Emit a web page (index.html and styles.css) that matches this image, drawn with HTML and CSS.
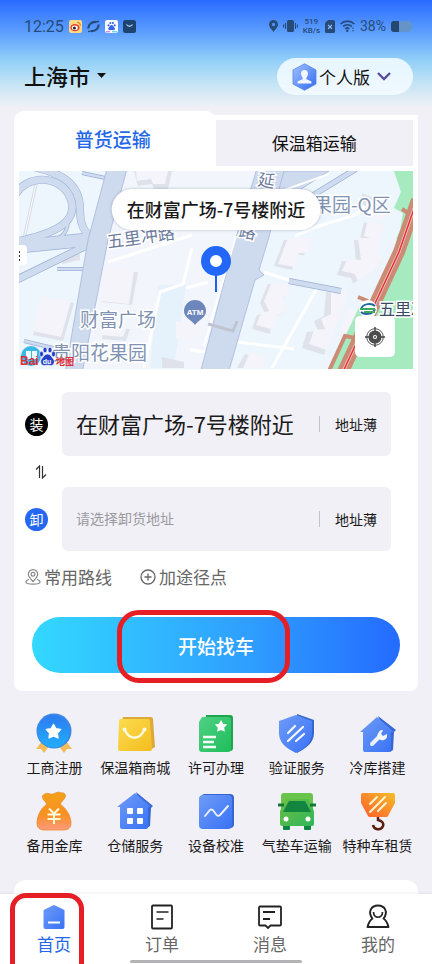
FILE: index.html
```
<!DOCTYPE html>
<html lang="zh-CN">
<head>
	<meta charset="UTF-8">
	<meta name="viewport" content="width=device-width, initial-scale=1">
	<title>首页</title>
	<link rel="stylesheet" href="styles.css">
</head>
<body>
<div id="wrapper">
    <header class="header">
        <div class="status-bar">
            <div class="status-left">
                <span class="time">12:25</span>
                <svg class="s-icon" viewBox="0 0 13 13"><rect width="13" height="13" rx="2" fill="#fbd986"/><ellipse cx="6" cy="7.6" rx="4.6" ry="3.6" fill="#e2402c"/><ellipse cx="5.8" cy="7.8" rx="3" ry="2.3" fill="#fff"/><circle cx="5.4" cy="8" r="1.5" fill="#222"/><path d="M8.3 2.4a3 3 0 0 1 3 3.3" fill="none" stroke="#e8792c" stroke-width="1.2"/></svg>
                <svg class="s-icon" viewBox="0 0 13 13"><path d="M1.500 8.500C1 5 4.500 1.500 9 2M11.500 4.500C12 8 8.500 11.500 4 11" fill="none" stroke="#274b78" stroke-width="2.200"/><path d="M1 11.500C2.500 11.500 4 11.200 5 10.500M12 1.500C10.500 1.500 9 1.800 8 2.500" fill="none" stroke="#274b78" stroke-width="1.500"/></svg>
                <svg class="s-icon" viewBox="0 0 13 13"><rect width="13" height="13" rx="2" fill="#fff"/><g fill="#3468e8"><circle cx="3.500" cy="5.300" r="1.100"/><circle cx="5.300" cy="3" r="1.100"/><circle cx="7.900" cy="3" r="1.100"/><circle cx="9.700" cy="5.300" r="1.100"/><path d="M6.600 5c1.600 0 1.800 1.600 2.800 2.500 1.200 1.200.3 3-1.200 2.700-1-.2-2.200-.2-3.200 0-1.500.3-2.400-1.500-1.200-2.700C4.800 6.600 5 5 6.600 5z"/></g><path d="M1 11.800h4" stroke="#c35bd8"/><path d="M7 11.800h5" stroke="#31c4dc"/></svg>
                <svg class="s-icon" viewBox="0 0 13 13"><rect width="13" height="13" rx="2.500" fill="#1f436f"/><path d="M3.500 4.500c1.500 2.300 4.500 2.300 6 0" fill="none" stroke="#9cc6f3" stroke-width="1.300"/></svg>
            </div>
            <div class="status-right">
                <svg width="9" height="12" viewBox="0 0 9 12"><path fill-rule="evenodd" d="M4.500 0A4.500 4.500 0 0 1 9 4.500C9 7.500 6 9.500 4.500 12 3 9.500 0 7.500 0 4.500A4.500 4.500 0 0 1 4.500 0zm0 2.800a1.700 1.700 0 1 0 0 3.400 1.700 1.700 0 0 0 0-3.400z" fill="#274b78"/></svg>
                <svg width="15" height="12" viewBox="0 0 15 12"><rect x="4" width="7" height="12" rx="1.500" fill="#274b78"/><path d="M2.500 3v6M.6 4.500v3M12.500 3v6M14.400 4.500v3" stroke="#274b78" stroke-width="1.100"/></svg>
                <span class="speed"><span>519</span><span>KB/s</span></span>
                <svg width="10" height="13" viewBox="0 0 10 13"><path d="M3 0h5.500A1.500 1.500 0 0 1 10 1.500v10A1.500 1.500 0 0 1 8.500 13h-7A1.500 1.500 0 0 1 0 11.500V3z" fill="#274b78"/><path d="M3 4.800l4 4M7 4.800l-4 4" stroke="#8fc3fa" stroke-width="1.200"/></svg>
                <svg width="15" height="12" viewBox="0 0 15 12"><g fill="none" stroke="#274b78" stroke-width="1.600"><path d="M.6 4C4.500.2 10.500.2 14.400 4"/><path d="M3 6.500c2.500-2.400 6.500-2.400 9 0"/><path d="M5.200 8.800c1.300-1.200 3-1.200 4.200 0"/></g><circle cx="7.300" cy="10.800" r="1.200" fill="#274b78"/><path d="M13 7.500v4" stroke="#274b78" stroke-dasharray="1.500 1"/></svg>
                <span class="percent">38%</span>
                <svg width="22" height="11" viewBox="0 0 22 11"><rect width="20" height="11" rx="3" fill="#6595c8"/><path d="M3 0h5v11H3a3 3 0 0 1-3-3V3a3 3 0 0 1 3-3z" fill="#234872"/><path d="M20 3.500q1.500 2 0 4" stroke="#6595c8" stroke-width="1.500"/></svg>
            </div>
        </div>
        <div class="top-bar">
            <button type="button" class="city">
                <span>上海市</span>
                <svg width="9" height="5" viewBox="0 0 9 5"><path d="M0 0h9L4.500 5z" fill="#111"/></svg>
            </button>
            <button type="button" class="version">
                <svg width="25" height="28" viewBox="0 0 25 28">
                    <defs><linearGradient id="hex" x1="0" y1="0" x2="1" y2="1"><stop offset="0" stop-color="#a4c3fb"/><stop offset="1" stop-color="#2f69f5"/></linearGradient></defs>
                    <path d="M12.500.8L24 7v14l-11.500 6.300L1 21V7z" fill="url(#hex)" stroke="#5486e8" stroke-width=".8"/>
                    <path d="M12.500 7c2.500 0 3.700 1.700 3.500 4-.2 1.700-.9 2.800-1.600 3.500v1.700l4.100 1.800c.8.400 1 1 1 2.500h-14c0-1.500.2-2.100 1-2.500l4.100-1.800v-1.700C9.900 13.800 9.200 12.700 9 11c-.2-2.300 1-4 3.500-4z" fill="#f1f6ff"/>
                </svg>
                <span>个人版</span>
                <svg class="chevron" width="14" height="9" viewBox="0 0 14 9"><path d="M1 1l6 6 6-6" fill="none" stroke="#5a4a9c" stroke-width="2.300"/></svg>
            </button>
        </div>
    </header>

    <main class="main">
        <section class="card">
            <div class="tabs">
                <button type="button" class="tab current">普货运输</button>
                <button type="button" class="tab"><span>保温箱运输</span></button>
            </div>

            <div class="map">
                <svg class="map-bg" viewBox="19 171 394 198" preserveAspectRatio="xMidYMid slice">
                    <rect x="19" y="171" width="394" height="198" fill="#edf5fd"/>
                    <path d="M126 171h130l-24 75-30 122H82l26-128z" fill="#f2f6fc"/>
                    <path d="M158 285h28l-12 83h-24z" fill="#e5f1fb"/>
                    <!-- 建筑 -->
                    <g fill="#dfe2ea">
                        <path d="M134 171h38l-4 18h-14l-2-5-14 2z"/>
                        <path d="M108 270l30 2-6 33-30-3z"/>
                        <path d="M43 298l31 5-11 38-30-6z"/>
                        <path d="M104 326l26 3-4 12-24-2z"/>
                        <path d="M162 357l22 5v6h-22z"/>
                        <path d="M284 240h25l-5 15h-8l-4 15-18-4z"/>
                        <path d="M354 240h22l-4 16 10 2-8 24-20 4-3-8-14-3 5-14 14 1z"/>
                        <path d="M268 284l16 2 2 10-8 4 6 12-12 6-2 16-18-5 5-14 8-2-5-10z"/>
                        <path d="M326 292l16 3-2 14 12 5-8 20-14 5-6 16-22-7 5-16 11-1-4-10 10-5z"/>
                        <path d="M362 193l18 8-2 16-14-5zM364 222l14 6-5 16-13-5z"/>
                        <path d="M245 354l18 5-4 9h-22z"/>
                        <path d="M62 256l18-2v6l-18 4z"/>
                    </g>
                    <g fill="#f4f4fa">
                        <path d="M136 171h32l-3 13h-12l-2-5-14 2z"/>
                        <path d="M105 268l29 3-5 33-29-3z"/>
                        <path d="M41 296l30 5-10 36-28-6z"/>
                        <path d="M101 324l26 3-4 10-24-2z"/>
                        <path d="M176 321l22 3 2 16-24-1z"/>
                        <path d="M288 238h24l-5 15h-8l-4 14-17-3z"/>
                        <path d="M358 238h24l-4 16 9 2-9 22-20 4-3-8-13-3 5-12 14 1z"/>
                        <path d="M272 282l16 2 2 10-8 4 6 12-12 6-2 14-18-5 5-12 8-2-5-10z"/>
                        <path d="M331 290l16 3-2 14 12 5-8 20-14 5-6 14-20-7 5-14 11-1-4-10 10-5z"/>
                        <path d="M366 197l20 9-3 15-17-6zM368 219l16 7-5 15-15-5z"/>
                        <path d="M250 352l17 5-4 11h-20z"/>
                    </g>
                    <!-- 小路 -->
                    <g fill="none" stroke="#fff" stroke-width="3">
                        <path d="M108 262l84-27M186 288l22-6M192 248l-9 36-23 8-16 76"/>
                        <path d="M264 272l30 10M317 288l-45 80M230 341l64 8M295 236c40-20 58-14 70-30M190 350l16 2"/>
                    </g>
                    <path d="M37 180L23 243" stroke="#d6d9e4" stroke-width="3"/>
                    <path d="M37 180L23 243" stroke="#fff" stroke-width="1"/>
                    <!-- 主路 -->
                    <g fill="none" stroke="#9db0d6">
                        <path d="M14 197c12-24 46-22 56 0 8 20-4 34-51 44" stroke-width="8"/>
                        <path d="M34 167c26 6 46 16 46 42 0 16 4 24 14 29" stroke-width="8"/>
                        <path d="M14 281l86-42" stroke-width="8"/>
                        <path d="M14 247l90-9" stroke-width="14"/>
                        <path d="M68 219c0 10-3 17-14 22M82 173l28 6M57 269h30M24 341l50 12" stroke-width="4"/>
                        <path d="M284 213l72-44" stroke-width="6"/>
                        <path d="M289 281l52 10" stroke-width="6"/>
                    </g>
                    <g fill="none" stroke="#cfdcef">
                        <path d="M14 197c12-24 46-22 56 0 8 20-4 34-51 44" stroke-width="7"/>
                        <path d="M34 167c26 6 46 16 46 42 0 16 4 24 14 29" stroke-width="7"/>
                        <path d="M14 281l86-42" stroke-width="6.500"/>
                        <path d="M14 247l90-9" stroke-width="12.500"/>
                        <path d="M68 219c0 10-3 17-14 22M82 173l28 6M57 269h30M24 341l50 12" stroke-width="2.500"/>
                        <path d="M284 213l72-44" stroke-width="4.500"/>
                        <path d="M289 281l52 10" stroke-width="4.500"/>
                    </g>
                    <g fill="#cedaee" stroke="#a6b8da" stroke-width=".8">
                        <path d="M108 165h20l-20 75-26 134H65l23-134z"/>
                        <path d="M258 165h28l-17 72-10 33 5 5-9 5-27 94h-28l34-130z"/>
                        <path d="M284 171h45l-40 26-14 6z"/>
                    </g>
                    <path d="M236 236l-32 110M279 192l50-18" fill="none" stroke="#fff" stroke-width="2"/>
                    <path d="M208 324l25 7 4-10" fill="none" stroke="#bfc4d0" stroke-width="3"/>
                    <!-- 绿地和轨道 -->
                    <path d="M394 171h19v198h-84l24-49 10-21 17-24 20-45 3-17-9-5 7-16z" fill="#a6eabf"/>
                    <path d="M403 238l-31 64-24 4-19 62h-9l22-58 8-25 24-14 17-31z" fill="#edf4fb"/>
                    <g fill="none" stroke="#cc8b75">
                        <path d="M417 200l-18 52-28 60-30 64" stroke-width="12"/>
                        <path d="M358 297l10 4M402 209l6 4M355 338l-10-2-16 35" stroke-width="4"/>
                    </g>
                    <path d="M417 200l-18 52-28 60-30 64" fill="none" stroke="#f0cfc6" stroke-width="3"/>
                    <path d="M417 200l-18 52-28 60-30 64" fill="none" stroke="#e5303c" stroke-width="1.500"/>
                    <!-- 地名 -->
                    <g class="place">
                        <text x="80" y="327">财富广场</text>
                        <text x="52" y="360">贵阳花果园</text>
                        <text x="313" y="212">果园-Q区</text>
                    </g>
                    <g class="road">
                        <text x="108" y="248" transform="rotate(-8 108 248)">五里冲路</text>
                        <text x="257" y="185" transform="rotate(10 257 185)">延</text>
                        <text x="238" y="236" transform="rotate(12 238 236)">路</text>
                    </g>
                    <text class="station" x="379" y="315">五里冲</text>
                    <circle cx="368" cy="309" r="9" fill="#fff"/>
                    <path d="M361 309c2-6 11-6 14-3M375 309c-2 6-11 6-14 3" fill="none" stroke="#22659c" stroke-width="2"/>
                    <path d="M360 309h15M364 312h11" stroke="#40a860" stroke-width="2"/>
                    <!-- ATM -->
                    <path d="M195 300a11 11 0 0 1 11 11c0 7-8 9-11 14-3-5-11-7-11-14a11 11 0 0 1 11-11z" fill="#6d87bd"/>
                    <text class="atm" x="195" y="315">ATM</text>
                    <rect x="10" y="245" width="17" height="20" rx="4" fill="#fff"/>
                    <path d="M19 251v10" stroke="#333" stroke-width="2" stroke-dasharray="2 2"/>
                    <!-- 定位针 -->
                    <path d="M216 275v17" stroke="#1c62e8" stroke-width="2"/>
                    <circle cx="216" cy="261" r="10.500" fill="#fff" stroke="#2267f5" stroke-width="9"/>
                    <!-- 百度地图 -->
                    <circle cx="31" cy="356" r="10" fill="#3cb8e4"/>
                    <path d="M26 351h5v8h-5zM32 351h5v8h-5z" fill="#eefaff"/>
                    <text class="baidu" x="20" y="365">Bai</text>
                    <g fill="#2440c8" stroke="#fff" stroke-width=".6"><ellipse cx="41.500" cy="354" rx="2" ry="2.800"/><ellipse cx="45" cy="350" rx="2" ry="2.800"/><ellipse cx="50" cy="350" rx="2" ry="2.800"/><ellipse cx="53.500" cy="354" rx="2" ry="2.800"/><path d="M47.500 354c3 0 4 3 6 5 2 3 0 7-3 6.500-2-.5-4-.5-6 0-3 .5-5-3.500-3-6.500 2-2 3-5 6-5z"/></g>
                    <text class="du" x="47" y="364">du</text>
                    <text class="baidu ditu" x="56" y="365">地图</text>
                </svg>
                <div class="map-tip">在财富广场-7号楼附近</div>
                <button type="button" class="locate" aria-label="定位">
                    <svg width="20" height="20" viewBox="0 0 20 20"><circle cx="10" cy="10" r="8.300" fill="none" stroke="#555"/><circle cx="10" cy="10" r="4.300" fill="#fff" stroke="#4c4c4c" stroke-width="4.500"/><circle cx="10" cy="10" r="1" fill="#444"/><path d="M10 0v4M10 16v4M0 10h4M16 10h4" stroke="#444" stroke-width="1.400"/></svg>
                </button>
            </div>

            <form class="address">
                <div class="row">
                    <label class="dot" for="load">装</label>
                    <div class="field">
                        <input type="text" id="load" value="在财富广场-7号楼附近" placeholder="请选择装货地址">
                        <button type="button" class="book">地址薄</button>
                    </div>
                </div>
                <button type="button" class="swap" aria-label="交换">
                    <svg width="12" height="14" viewBox="0 0 12 14"><path d="M1 4.500L4.500 1v12M7.500 1v12L11 9.500" fill="none" stroke="#333" stroke-width="1.200"/></svg>
                </button>
                <div class="row">
                    <label class="dot blue" for="unload">卸</label>
                    <div class="field">
                        <input type="text" id="unload" placeholder="请选择卸货地址">
                        <button type="button" class="book">地址薄</button>
                    </div>
                </div>
                <div class="links">
                    <a href="#">
                        <svg width="16" height="16" viewBox="0 0 16 16"><g fill="none" stroke="#888" stroke-width="1.200"><path d="M8 12.500C5 9.500 3.300 7.700 3.300 5.300a4.700 4.700 0 0 1 9.400 0c0 2.400-1.700 4.200-4.700 7.200z"/><circle cx="8" cy="5.300" r="1.900"/><path d="M4 10.500c-2 .6-3 1.500-3 2.500 0 1.300 3 2.200 7 2.200s7-.9 7-2.200c0-1-1-1.900-3-2.500"/></g></svg>
                        <span>常用路线</span>
                    </a>
                    <a href="#">
                        <svg width="16" height="16" viewBox="0 0 16 16"><circle cx="8" cy="8" r="7" fill="none" stroke="#666" stroke-width="1.300"/><path d="M8 4.500v7M4.500 8h7" stroke="#666" stroke-width="1.300"/></svg>
                        <span>加途径点</span>
                    </a>
                </div>
                <button type="button" class="submit">开始找车<i class="mark"></i></button>
            </form>
        </section>

        <nav class="services">
            <a href="#">
                <svg viewBox="0 0 40 40">
                    <defs><linearGradient id="blue" x1="0" y1="0" x2="1" y2="1"><stop offset="0" stop-color="#6f9cf8"/><stop offset="1" stop-color="#3871f5"/></linearGradient><linearGradient id="medal" x1="0" y1="0" x2="0" y2="1"><stop offset="0" stop-color="#2c7cf0"/><stop offset="1" stop-color="#22adfb"/></linearGradient></defs>
                    <path d="M8 28l-6 8 5 0 3 4 6-8zM32 28l6 8-5 0-3 4-6-8z" fill="#f2bd59"/>
                    <circle cx="20" cy="18" r="17.500" fill="#3b86e8"/><circle cx="19.500" cy="18.500" r="16" fill="url(#medal)"/>
                    <path d="M19.500 11.500l2.300 4.200 4.800.9-3.300 3.500.6 4.800-4.400-2.100-4.400 2.100.6-4.800-3.300-3.500 4.800-.9z" fill="#fff" stroke="#fff" stroke-width="1.500" stroke-linejoin="round"/>
                </svg>
                <span>工商注册</span>
            </a>
            <a href="#">
                <svg viewBox="0 0 40 40">
                    <defs><linearGradient id="bag" x1="0" y1="0" x2="1" y2="1"><stop offset="0" stop-color="#fbdc4e"/><stop offset="1" stop-color="#f4bd20"/></linearGradient></defs>
                    <path d="M8 4h28a2 2 0 0 1 2 2l2 28-5 3L7 8z" fill="#dfa83a"/>
                    <path d="M6 6h27a2 2 0 0 1 2 2l2 28a2 2 0 0 1-2 2H5a2 2 0 0 1-2-2L4 8a2 2 0 0 1 2-2z" fill="url(#bag)"/>
                    <path d="M9.500 16.500c5 11 15 11 20 0" fill="none" stroke="#fffbe0" stroke-width="2.300"/><circle cx="9.500" cy="16.500" r="2" fill="#fffbe0"/><circle cx="29.500" cy="16.500" r="2" fill="#fffbe0"/>
                </svg>
                <span>保温箱商城</span>
            </a>
            <a href="#">
                <svg viewBox="0 0 40 40">
                    <defs><linearGradient id="green" x1="0" y1="0" x2="1" y2="1"><stop offset="0" stop-color="#4fd184"/><stop offset="1" stop-color="#20bd5c"/></linearGradient></defs>
                    <path d="M10 2h24a3 3 0 0 1 3 3v30a3 3 0 0 1-3 3H6z" fill="#1ca64e"/>
                    <path d="M12 4h20a3 3 0 0 1 3 3v29a3 3 0 0 1-3 3H6a3 3 0 0 1-3-3V9l3-5z" fill="url(#green)"/>
                    <path d="M25 7l2 3.700 4.200.8-3 3.100.6 4.200-3.800-1.900-3.800 1.900.6-4.200-3-3.100 4.200-.8z" fill="#fff"/>
                    <path d="M7 24h13M7 29h11M7 34h13" stroke="#f2fff6" stroke-width="2.500"/>
                </svg>
                <span>许可办理</span>
            </a>
            <a href="#">
                <svg viewBox="0 0 40 40">
                    <path d="M20 1l17 6v13c0 9-7 15-17 20z" fill="#3566cb"/>
                    <path d="M19 2l16 6v12c0 9-6 15-16 20C8 35 2 29 2 20V8z" fill="url(#blue)"/>
                    <path d="M11 20l7-7M11 28L26 14M19 28l8-7" stroke="#f4f8ff" stroke-width="2.200" stroke-linecap="round"/>
                </svg>
                <span>验证服务</span>
            </a>
            <a href="#">
                <svg viewBox="0 0 40 40">
                    <path d="M20 3l18 14-2 2-1 18-3 2z" fill="#3768d1"/>
                    <path d="M19 4l17 15h-3v18a2 2 0 0 1-2 2H7a2 2 0 0 1-2-2V19H2z" fill="url(#blue)"/>
                    <path d="M14 31l8-8" stroke="#e9f1ff" stroke-width="4" stroke-linecap="round"/>
                    <path d="M25 17l-2 4 2 2 4-2c1 5-3 7-6 6-4-1-5-5-2-8 1-2 3-2 4-2z" fill="#f4f8ff"/>
                </svg>
                <span>冷库搭建</span>
            </a>
            <a href="#">
                <svg viewBox="0 0 40 40">
                    <defs><linearGradient id="money" x1="0" y1="0" x2="0" y2="1"><stop offset="0" stop-color="#f3a21a"/><stop offset=".6" stop-color="#f79021"/><stop offset="1" stop-color="#fb9a80"/></linearGradient></defs>
                    <path d="M11 3c3-2 5 1 8 0s5-3 8-1c4-1 6 3 3 6l-4 5c6 4 11 12 11 19 0 5-3 7-7 7H10c-4 0-7-2-7-7 0-7 4-15 10-19L9 8c-1-2-1-4 2-5z" fill="url(#money)" stroke="#ec8b28" stroke-width=".8"/>
                    <path d="M15 17.500l5 5 5-5M20 22v11M13.500 23.500h13M13.500 28h13" fill="none" stroke="#fffbd9" stroke-width="2"/>
                </svg>
                <span>备用金库</span>
            </a>
            <a href="#">
                <svg viewBox="0 0 40 40">
                    <path d="M21 1l17 14-2 2-1 18-3 2z" fill="#3768d1"/>
                    <path d="M20 2l16 14h-3v20a2 2 0 0 1-2 2H7a2 2 0 0 1-2-2V16H2z" fill="url(#blue)"/>
                    <g fill="#fff"><rect x="12" y="17" width="6" height="6" rx="1"/><rect x="22" y="17" width="6" height="6" rx="1"/><rect x="12" y="27" width="6" height="6" rx="1"/><rect x="22" y="27" width="6" height="6" rx="1"/></g>
                </svg>
                <span>仓储服务</span>
            </a>
            <a href="#">
                <svg viewBox="0 0 40 40">
                    <rect x="5" y="3" width="33" height="34" rx="4" fill="#3565cf"/>
                    <rect x="3" y="4" width="33" height="34" rx="4" fill="url(#blue)"/>
                    <path d="M9 25l5-6c4-3 6 9 10 5l8-9" fill="none" stroke="#e9f1ff" stroke-width="1.900" stroke-linecap="round"/>
                </svg>
                <span>设备校准</span>
            </a>
            <a href="#">
                <svg viewBox="0 0 40 40">
                    <defs><linearGradient id="truck" x1="0" y1="0" x2="1" y2="1"><stop offset="0" stop-color="#6dbe42"/><stop offset="1" stop-color="#2fb65c"/></linearGradient></defs>
                    <rect x="6" y="32" width="7" height="7" rx="1" fill="#0d8440"/><rect x="27" y="32" width="7" height="7" rx="1" fill="#0d8440"/>
                    <rect x="4" y="2" width="32" height="20" rx="3" fill="#69c549"/>
                    <path d="M9 8h22l6 12v13a2 2 0 0 1-2 2H5a2 2 0 0 1-2-2V20z" fill="url(#truck)"/>
                    <path d="M1 14h6M33 14h6" stroke="#14783a" stroke-width="3"/>
                    <path d="M12 10h16l6 11H6z" fill="#12863f"/>
                    <circle cx="9" cy="28" r="2.500" fill="#fff"/><circle cx="31" cy="28" r="2.500" fill="#fff"/>
                </svg>
                <span>气垫车运输</span>
            </a>
            <a href="#">
                <svg viewBox="0 0 40 40">
                    <defs><linearGradient id="crane" x1="0" y1="1" x2="1" y2="0"><stop offset="0" stop-color="#ff5a2a"/><stop offset="1" stop-color="#f5bd2a"/></linearGradient></defs>
                    <path d="M20 26v3c4 1 6 3 5 6-2 5-9 4-10-1" fill="none" stroke="#5b1d12" stroke-width="2.500"/>
                    <path d="M5 2h30a2 2 0 0 1 2 2v8l-7 13a2 2 0 0 1-2 1H12a2 2 0 0 1-2-1L3 12V4a2 2 0 0 1 2-2z" fill="url(#crane)"/>
                    <path d="M12 13l7-7M12 21L27 6M20 20l8-8" stroke="#fff5d0" stroke-width="2" stroke-linecap="round"/>
                </svg>
                <span>特种车租赁</span>
            </a>
        </nav>

        <section class="card-next"></section>
    </main>

    <nav class="tab-bar">
        <a href="#" class="current">
            <svg viewBox="0 0 24 26"><path d="M12 1l10.500 5v17a2 2 0 0 1-2 2h-17a2 2 0 0 1-2-2V6z" fill="url(#blue)"/><path d="M6 18.500h12" stroke="#fff" stroke-width="2"/></svg>
            <span>首页</span>
            <i class="mark"></i>
        </a>
        <a href="#">
            <svg viewBox="0 0 24 26"><rect x="2" y="1.500" width="20" height="23" rx="1" fill="none" stroke="#222" stroke-width="1.800"/><path d="M6.500 8h12M6.500 15h7" stroke="#222" stroke-width="1.600"/></svg>
            <span>订单</span>
        </a>
        <a href="#">
            <svg viewBox="0 0 24 26"><path d="M2 2.500h20a1 1 0 0 1 1 1v17a1 1 0 0 1-1 1H12.500L10 24l-2.500-2.500H2a1 1 0 0 1-1-1v-17a1 1 0 0 1 1-1z" fill="none" stroke="#222" stroke-width="1.800"/><path d="M5 8h12M5 15h7" stroke="#222" stroke-width="1.800"/></svg>
            <span>消息</span>
        </a>
        <a href="#">
            <svg viewBox="0 0 24 26"><path d="M6.500 14.500C1.500 8 5 1.500 12 1.500S22.500 8 17.500 14.500c2.500 1.500 4 4.500 5 8.500h-21c1-4 2.500-7 5-8.500z" fill="none" stroke="#222" stroke-width="1.900" stroke-linejoin="round"/><path d="M7.500 8c0 7 9 7 9 0" fill="none" stroke="#222" stroke-width="1.700"/></svg>
            <span>我的</span>
        </a>
    </nav>
</div>
</body>
</html>
```
FILE: styles.css
```
*{
    box-sizing: border-box;
}
body,form,input,button{
    margin: 0;
    padding: 0;
}
body{
    font-family: "Noto Sans CJK SC", sans-serif;
    font-size: 14px;
    color: #1a1a1a;
    background: #f1f0f6;
}
a{
    color: inherit;
    text-decoration: none;
}
button,input{
    border: none;
    background: none;
    color: inherit;
    font-family: inherit;
}
button{
    cursor: pointer;
}
svg{
    display: block;
    flex: none;
}
#wrapper{
    display: flex;
    flex-direction: column;
    min-height: 100vh;
    overflow: hidden;
    background: linear-gradient(#296bff 0, #5c9efe 32px, #91cff8 60px, #c5e4f5 84px, #f1f0f6 108px);
}

/* 顶部 */
.header{
    padding: 15px 19px 16px 24px;
}
.status-bar,
.status-left,
.status-right,
.top-bar{
    display: flex;
    align-items: center;
}
.status-bar,
.top-bar{
    justify-content: space-between;
}
.status-bar{
    height: 22px;
    color: #274b78;
    font-family: Roboto, sans-serif;
}
.status-left,
.status-right{
    gap: 5px;
}
.s-icon{
    width: 13px;
    height: 13px;
}
.time{
    font-size: 16px;
}
.percent{
    font-size: 14px;
}
.speed{
    display: flex;
    flex-direction: column;
    align-items: center;
    font-size: 8px;
    line-height: 9px;
    font-weight: 500;
}
.top-bar{
    margin-top: 21px;
}
.city{
    display: flex;
    align-items: center;
    gap: 7px;
    padding-bottom: 3px;
    font-size: 22px;
    line-height: 32px;
    font-weight: 500;
    color: #111;
}
.version{
    display: flex;
    align-items: center;
    gap: 2px;
    height: 37px;
    padding: 0 22px 0 15px;
    border-radius: 19px;
    background: rgba(243,250,255,.88);
    font-size: 17px;
    color: #111;
}
.chevron{
    margin-left: 5px;
}

/* 主卡片 */
.main{
    display: flex;
    flex-direction: column;
    flex: 1;
    padding: 0 14px;
}
.card{
    padding-bottom: 18px;
    border-radius: 10px 0 8px 8px;
    background: linear-gradient(#f1f0f6 4px, #fff 4px);
}
.tabs{
    display: flex;
    height: 60px;
}
.tab{
    flex: 1;
    font-size: 17px;
    color: #111;
    padding: 9px 5px 5px 0;
}
.tab span{
    display: flex;
    align-items: center;
    justify-content: center;
    height: 100%;
    padding-bottom: 2px;
    background: #f1f0f6;
}
.tab.current{
    padding: 0 4px 6px 0;
    border-radius: 10px 10px 0 0;
    background: #fff;
    font-size: 19px;
    font-weight: 500;
    color: #2468e8;
}

/* 地图 */
.map{
    position: relative;
    height: 198px;
    margin: 0 5px;
    overflow: hidden;
}
.map-bg{
    width: 100%;
    height: 100%;
}
.place{
    font-size: 19px;
    fill: #8193b3;
    stroke: #fff;
    stroke-width: 3px;
    paint-order: stroke;
}
.road{
    font-size: 17px;
    fill: #6e7d9c;
    stroke: #fff;
    stroke-width: 3px;
    paint-order: stroke;
}
.station{
    font-size: 16px;
    fill: #3c4a66;
    stroke: #fff;
    stroke-width: 3px;
    paint-order: stroke;
}
.atm{
    font-family: "Liberation Sans", sans-serif;
    font-size: 8px;
    font-weight: 700;
    fill: #fff;
    text-anchor: middle;
}
.baidu{
    font-family: "Liberation Sans", "Noto Sans CJK SC", sans-serif;
    font-size: 12px;
    font-weight: 700;
    fill: #df2b35;
}
.ditu{
    font-size: 9px;
}
.du{
    font-family: "Liberation Sans", sans-serif;
    font-size: 7px;
    font-weight: 700;
    fill: #fff;
    text-anchor: middle;
}
.map-tip{
    position: absolute;
    top: 18px;
    left: 50%;
    transform: translateX(-50%);
    padding: 0 15px;
    border-radius: 21px;
    background: #fff;
    box-shadow: 0 0 3px rgba(60,70,100,.35);
    font-size: 18px;
    line-height: 41px;
    font-weight: 500;
    white-space: nowrap;
}
.locate{
    position: absolute;
    right: 18px;
    bottom: 12px;
    display: flex;
    align-items: center;
    justify-content: center;
    width: 40px;
    height: 41px;
    border-radius: 5px;
    background: #fff;
}

/* 地址 */
.address{
    display: flex;
    flex-direction: column;
    padding: 23px 18px 0;
}
.row{
    display: flex;
    align-items: center;
    gap: 14px;
    margin: 0 9px 0 -7px;
}
.dot{
    flex: none;
    width: 23px;
    height: 23px;
    border-radius: 50%;
    background: #000;
    color: #fff;
    font-size: 14px;
    line-height: 22px;
    text-align: center;
}
.dot.blue{
    background: #2468f2;
}
.field{
    display: flex;
    align-items: center;
    flex: 1;
    min-width: 0;
    height: 64px;
    padding: 0 14px;
    border-radius: 6px;
    background: #f1f0f6;
}
.field input{
    flex: 1;
    min-width: 0;
    height: 40px;
    padding-bottom: 3px;
    font-size: 22px;
    outline: none;
}
.field input:placeholder-shown{
    font-size: 14px;
}
.field input::placeholder{
    color: #9a9aa0;
    opacity: 1;
}
.book{
    padding-left: 15px;
    border-left: 1px solid #c2c2c8;
    font-size: 14px;
    line-height: 16px;
}
.swap{
    align-self: flex-start;
    display: flex;
    align-items: center;
    height: 31px;
    margin-left: 3px;
}
.links{
    display: flex;
    gap: 28px;
    margin: 14px 0 28px -7px;
    font-size: 17px;
    line-height: 24px;
    color: #666;
}
.links a{
    display: flex;
    align-items: center;
    gap: 3px;
}
.submit{
    position: relative;
    height: 56px;
    border-radius: 28px;
    background: linear-gradient(90deg, #33d8ff, #2f9dff 60%, #246bff);
    color: #fff;
    font-size: 19px;
    font-weight: 500;
}
/* 红框标注 */
.mark{
    position: absolute;
    border: 5px solid #e61e26;
}
.submit .mark{
    top: -7px;
    bottom: -10px;
    left: 50%;
    width: 173px;
    margin-left: -99px;
    border-radius: 22px;
}

/* 服务 */
.services{
    display: grid;
    grid-template-columns: repeat(5, 1fr);
    row-gap: 14px;
    margin: 22px 0 25px;
}
.services a{
    display: flex;
    flex-direction: column;
    align-items: center;
    gap: 4px;
    font-size: 14px;
    line-height: 20px;
    white-space: nowrap;
}
.services svg{
    width: 40px;
    height: 40px;
}
.card-next{
    flex: 1;
    min-height: 14px;
    border-radius: 12px 12px 0 0;
    background: #fff;
}

/* 底部导航 */
.tab-bar{
    position: relative;
    display: flex;
    height: 70px;
    background: #fff;
    box-shadow: 0 -1px 3px rgba(0,0,0,.06);
}
.tab-bar a{
    position: relative;
    flex: 1;
    display: flex;
    flex-direction: column;
    align-items: center;
    gap: 2px;
    padding-top: 10px;
    font-size: 17px;
    line-height: 24px;
    color: #666;
}
.tab-bar svg{
    width: 24px;
    height: 26px;
}
.tab-bar .current{
    color: #2468e8;
}
.tab-bar .mark{
    top: -1px;
    bottom: -5px;
    left: 50%;
    width: 74px;
    margin-left: -44px;
    border-bottom: none;
    border-radius: 16px 16px 0 0;
}
.tab-bar::after{
    content: "";
    position: absolute;
    bottom: 1px;
    left: 30%;
    right: 30%;
    height: 3px;
    border-radius: 2px;
    background: #b4b4b6;
}
```
